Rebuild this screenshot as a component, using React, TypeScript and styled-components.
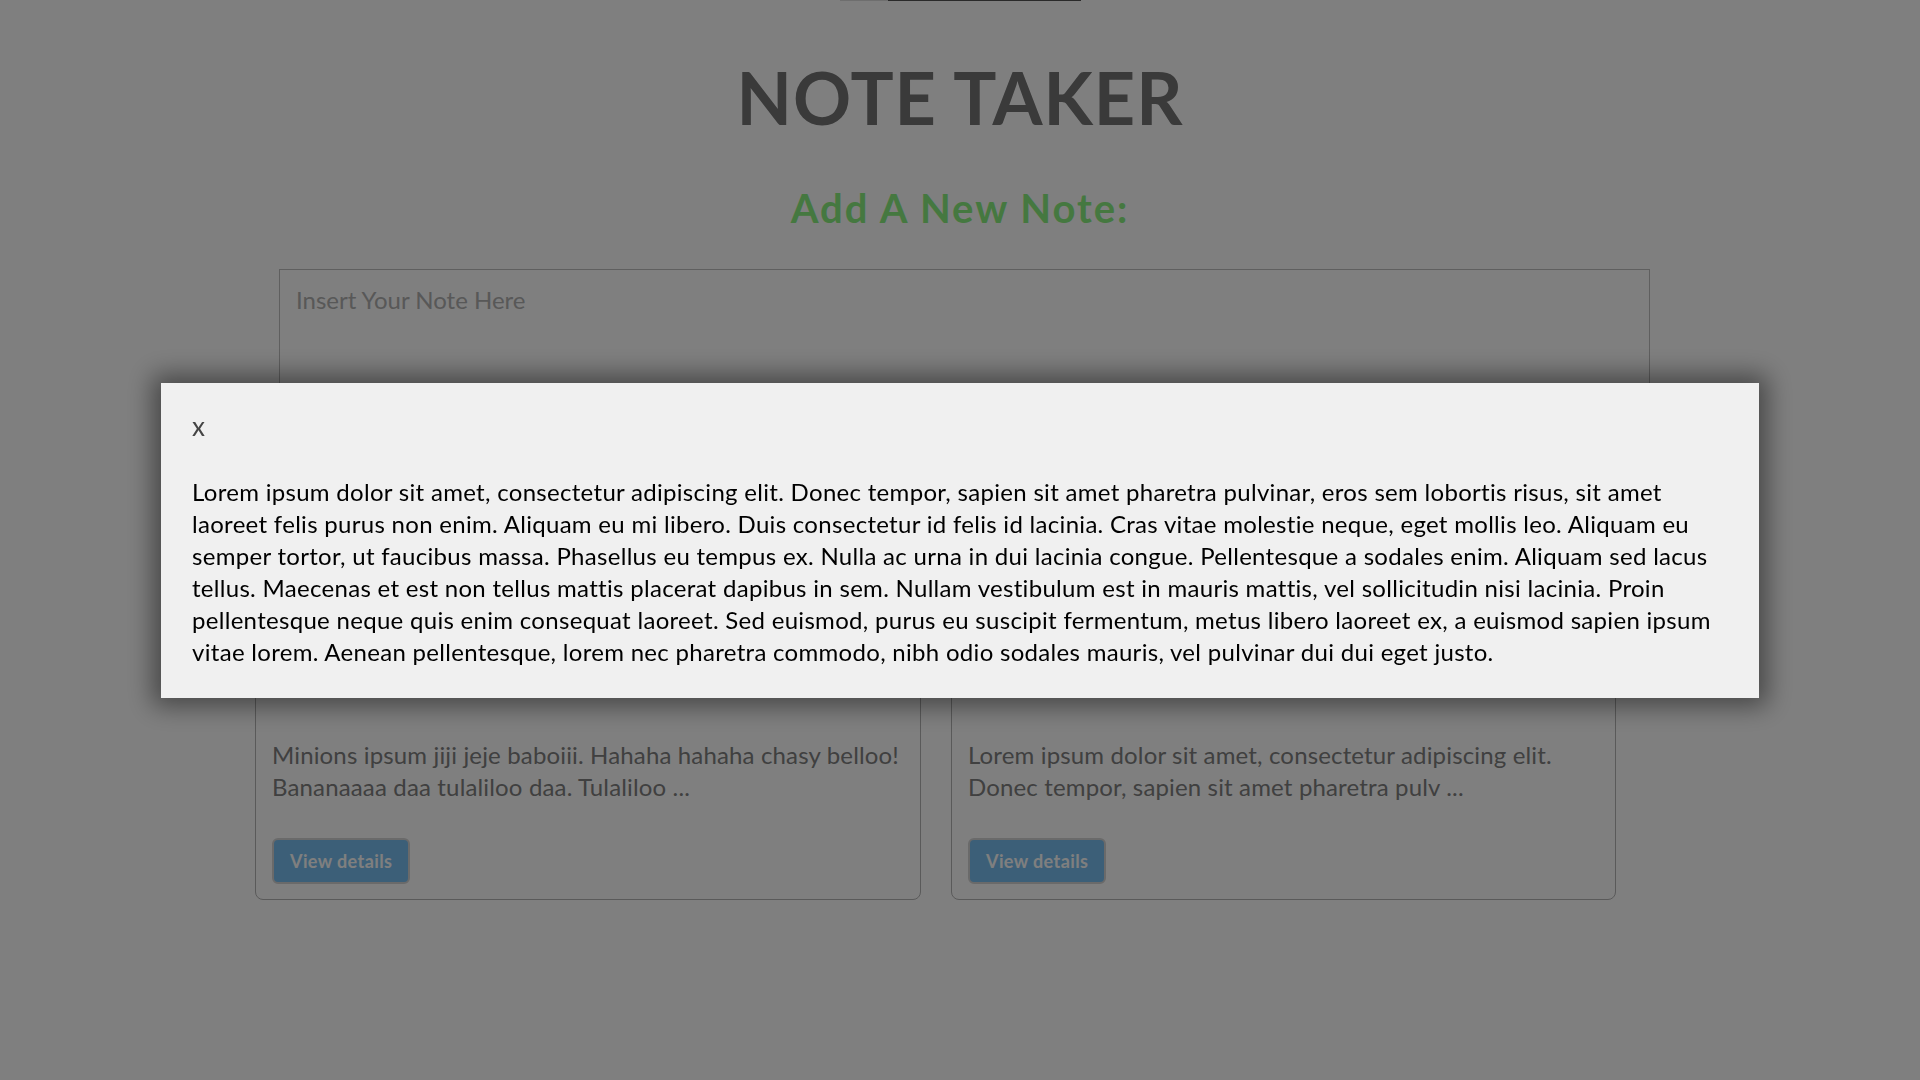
import React from "react";
import styled, { createGlobalStyle } from "styled-components";

const GlobalStyle = createGlobalStyle`
  html, body {
    margin: 0;
    padding: 0;
    background: #ffffff;
    font-family: "Lato", "Noto Sans", sans-serif;
  }
  * {
    box-sizing: border-box;
  }
`;

interface INote {
  id: number;
  text: string;
}

interface ISegment {
  width: number;
  shade: string;
}

const notes: INote[] = [
  {
    id: 1,
    text: "Minions ipsum jiji jeje baboiii. Hahaha hahaha chasy belloo! Bananaaaa daa tulaliloo daa. Tulaliloo ..."
  },
  {
    id: 2,
    text: "Lorem ipsum dolor sit amet, consectetur adipiscing elit. Donec tempor, sapien sit amet pharetra pulv ..."
  }
];

const fullText =
  "Lorem ipsum dolor sit amet, consectetur adipiscing elit. Donec tempor, sapien sit amet pharetra pulvinar, eros sem lobortis risus, sit amet laoreet felis purus non enim. Aliquam eu mi libero. Duis consectetur id felis id lacinia. Cras vitae molestie neque, eget mollis leo. Aliquam eu semper tortor, ut faucibus massa. Phasellus eu tempus ex. Nulla ac urna in dui lacinia congue. Pellentesque a sodales enim. Aliquam sed lacus tellus. Maecenas et est non tellus mattis placerat dapibus in sem. Nullam vestibulum est in mauris mattis, vel sollicitudin nisi lacinia. Proin pellentesque neque quis enim consequat laoreet. Sed euismod, purus eu suscipit fermentum, metus libero laoreet ex, a euismod sapien ipsum vitae lorem. Aenean pellentesque, lorem nec pharetra commodo, nibh odio sodales mauris, vel pulvinar dui dui eget justo.";

const segments: ISegment[] = [
  { width: 48, shade: "#dcdcdc" },
  { width: 193, shade: "#545454" }
];

const Page = styled.div`
  min-height: 100vh;
  display: flex;
  flex-direction: column;
  align-items: center;
`;

const TopStrip = styled.div`
  display: flex;
  height: 1px;
  margin-left: 1px;
`;

const StripPart = styled.div<{ $width: number; $shade: string }>`
  width: ${(p) => p.$width}px;
  height: 1px;
  background: ${(p) => p.$shade};
`;

const Title = styled.h1`
  margin: 53px 0 0;
  font-size: 72px;
  line-height: 1.2;
  font-weight: 700;
  letter-spacing: 1px;
  color: #747474;
`;

const SubTitle = styled.h2`
  margin: 44px 0 0;
  font-size: 40px;
  line-height: 1.2;
  font-weight: 700;
  letter-spacing: 2px;
  color: #8af080;
`;

const NoteForm = styled.form`
  width: 1371px;
  margin: 37px 0 0 9px;
  display: flex;
  flex-direction: column;
`;

const NoteInput = styled.textarea`
  width: 100%;
  height: 220px;
  padding: 16px;
  border: 1px solid #bebebe;
  font-family: inherit;
  font-size: 24px;
  line-height: 1.2;
  resize: none;
  outline: none;
  &::placeholder {
    color: #b0b0b0;
  }
`;

const CardGrid = styled.div`
  display: grid;
  grid-template-columns: 666px 665px;
  gap: 30px;
  margin: 151px 49px 0 0;
`;

const Card = styled.div`
  display: flex;
  flex-direction: column;
  align-items: flex-start;
  padding: 16px 16px 15px;
  border: 1px solid #b4b4b4;
  border-radius: 8px;
`;

const CardText = styled.p`
  margin: 82px 0 0;
  font-size: 24px;
  line-height: 32px;
  letter-spacing: 0.15px;
  color: #808080;
`;

const DetailsButton = styled.button`
  margin-top: 35px;
  height: 46px;
  padding: 0 16px;
  background: #78bef0;
  color: #ffffff;
  font-family: inherit;
  font-size: 18px;
  font-weight: 700;
  letter-spacing: 0.4px;
  border: 2px solid #d4d4d4;
  border-radius: 6px;
  cursor: pointer;
`;

const Overlay = styled.div`
  position: fixed;
  top: 0;
  right: 0;
  bottom: 0;
  left: 0;
  background: rgba(0, 0, 0, 0.5);
  display: flex;
  align-items: center;
  justify-content: center;
`;

const ModalBlock = styled.div`
  box-sizing: content-box;
  width: 80%;
  padding: 30px 31px;
  background: #f0f0f0;
  box-shadow: 0 0 24px 8px rgba(0, 0, 0, 0.45);
`;

const CloseButton = styled.div`
  font-size: 26px;
  line-height: 26px;
  height: 26px;
  color: #444444;
  cursor: pointer;
`;

const ModalText = styled.p`
  margin: 37px 0 0;
  font-size: 24px;
  line-height: 32px;
  letter-spacing: 0.3px;
  color: #000000;
`;

const App: React.FC = () => {
  return (
    <>
      <GlobalStyle />
      <Page>
        <TopStrip>
          {segments.map((s, i) => (
            <StripPart key={i} $width={s.width} $shade={s.shade} />
          ))}
        </TopStrip>
        <Title>NOTE TAKER</Title>
        <SubTitle>Add A New Note:</SubTitle>
        <NoteForm onSubmit={(e) => e.preventDefault()}>
          <NoteInput placeholder="Insert Your Note Here" />
        </NoteForm>
        <CardGrid>
          {notes.map((note) => (
            <Card key={note.id}>
              <CardText>{note.text}</CardText>
              <DetailsButton>View details</DetailsButton>
            </Card>
          ))}
        </CardGrid>
      </Page>
      <Overlay>
        <ModalBlock>
          <CloseButton>x</CloseButton>
          <ModalText>{fullText}</ModalText>
        </ModalBlock>
      </Overlay>
    </>
  );
};

export default App;
